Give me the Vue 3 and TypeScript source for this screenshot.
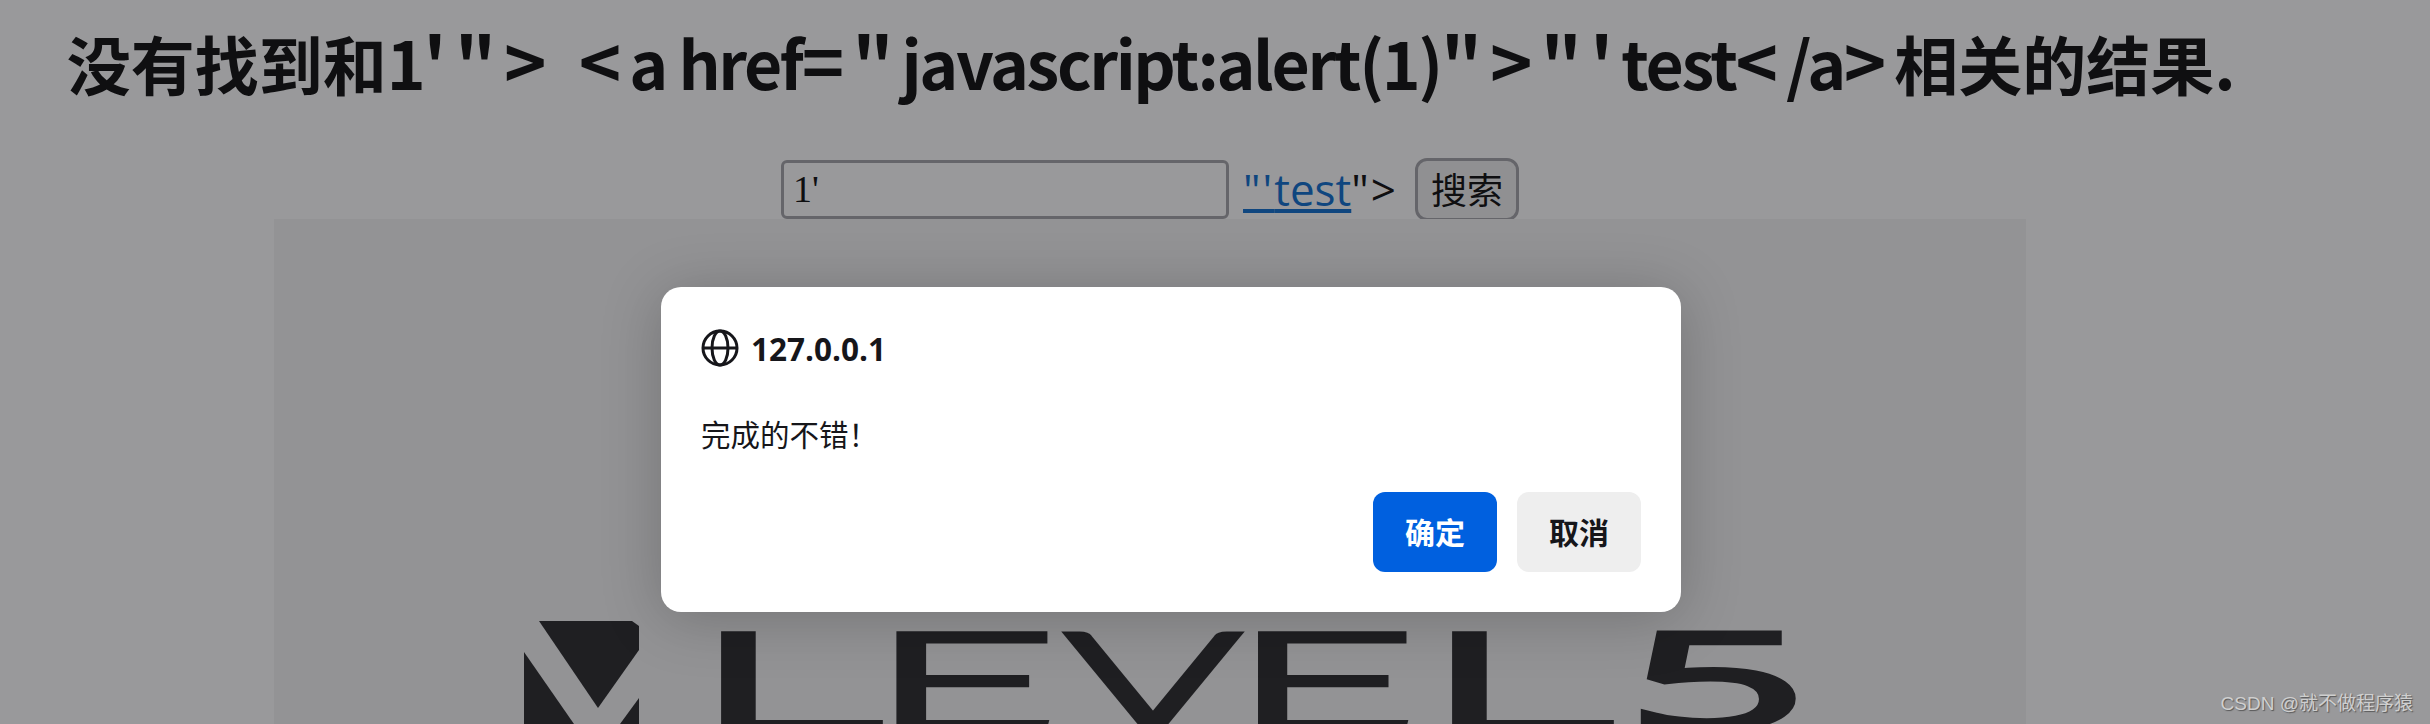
<script setup lang="ts">
import { ref } from 'vue'

const keyword = ref("1'")

// x and width of each letter of the logo
const logoLetters = [
  { ch: 'L', x: 695, w: 178 },
  { ch: 'E', x: 874, w: 178 },
  { ch: 'V', x: 1072, w: 162 },
  { ch: 'E', x: 1236, w: 175 },
  { ch: 'L', x: 1426, w: 178 },
  { ch: '5', x: 1630, w: 174 }
]
</script>

<template>
  <div class="page">
    <div class="content">
      <h1 class="title"><span class="cjk">没有找到和</span>1<span class="sym">'"&gt; &lt;</span>a href<span class="sym">="</span>javascript:alert(1)<span class="sym">"&gt;"'</span>test<span class="sym">&lt;</span>/a<span class="sym">&gt;</span><span class="cjk">相关的结果</span>.</h1>
      <form class="search" @submit.prevent>
        <input v-model="keyword" class="search-input" type="text" />
        <span class="search-rest"><a class="search-link" href="#"><span class="quote">"'</span>test</a><span class="quote">"&gt;</span></span>
        <button class="search-btn" type="button">搜索</button>
      </form>
      <div class="banner">
        <svg class="logo" viewBox="274 219 1752 505" width="1752" height="505">
          <polygon points="539,621 632,621 639,626 639,650 598,708" fill="#1e1e20" />
          <polygon points="524,652 574,724 598,760 524,760" fill="#1e1e20" />
          <polygon points="639,698 620,724 600,760 639,760" fill="#1e1e20" />
          <text
            v-for="(l, i) in logoLetters"
            :key="i"
            class="logo-text"
            :class="{ 'logo-five': l.ch === '5' }"
            :x="l.x"
            y="727"
            :textLength="l.w"
            lengthAdjust="spacingAndGlyphs"
          >{{ l.ch }}</text>
        </svg>
      </div>
    </div>

    <div class="scrim">
      <div class="dialog">
        <div class="dialog-head">
          <svg class="globe" viewBox="0 0 38 38" width="38" height="38" fill="none" stroke="#16161a" stroke-width="3">
            <circle cx="19" cy="19" r="17" />
            <ellipse cx="19" cy="19" rx="8" ry="17" />
            <path d="M2 19h34" />
          </svg>
          <span class="dialog-host">127.0.0.1</span>
        </div>
        <p class="dialog-msg">完成的不错！</p>
        <div class="dialog-actions">
          <button class="btn btn-ok" type="button">确定</button>
          <button class="btn btn-cancel" type="button">取消</button>
        </div>
      </div>
    </div>

    <span class="watermark">CSDN @就不做程序猿</span>
  </div>
</template>

<style>
html,
body {
  margin: 0;
  background: #fff;
  overflow: hidden;
}
</style>

<style scoped>
.page {
  position: relative;
  width: 2430px;
  height: 724px;
  overflow: hidden;
  font-family: "Open Sans", "Noto Sans CJK SC", sans-serif;
  color: #000;
}

.content {
  width: 2300px;
  display: flex;
  flex-direction: column;
  align-items: center;
}

.title {
  margin: 17px 0 0;
  height: 142px;
  font-family: "Noto Sans CJK SC", sans-serif;
  font-size: 66px;
  line-height: 88px;
  font-weight: 700;
  letter-spacing: -2.4px;
  white-space: nowrap;
}

.cjk {
  font-size: 64px;
  letter-spacing: 0;
}

.sym {
  font-size: 72px;
  line-height: 1;
  letter-spacing: 8px;
}

.search {
  display: flex;
  align-items: center;
  height: 60px;
  font-size: 44px;
}

.search-input {
  box-sizing: border-box;
  width: 448px;
  height: 59px;
  padding: 0 9px;
  border: 3px solid #a0a0a4;
  border-radius: 6px;
  background: #fff;
  color: #000;
  font-family: "Liberation Serif", serif;
  font-size: 38px;
  outline: none;
}

.search-rest {
  margin-left: 14px;
  line-height: 60px;
}

.quote {
  letter-spacing: 2px;
}

.search-link {
  color: #0066cc;
}

.search-btn {
  box-sizing: border-box;
  width: 104px;
  height: 63px;
  margin-left: 17px;
  padding: 0 0 2px;
  border: 3px solid #a0a0a4;
  border-radius: 12px;
  background: #efefef;
  color: #000;
  font-family: "Noto Sans CJK SC", sans-serif;
  font-size: 36px;
}

.banner {
  width: 1752px;
  height: 505px;
  background: #f4f4f4;
}

.logo {
  display: block;
}

.logo-text {
  font-family: Lato, sans-serif;
  font-size: 129px;
  font-weight: 100;
  fill: #1e1e20;
  stroke: #1e1e20;
  stroke-width: 11px;
}

.logo-five {
  font-family: "Open Sans", sans-serif;
  font-weight: 300;
  stroke-width: 9px;
}

.scrim {
  position: absolute;
  inset: 0;
  background: rgba(32, 32, 36, 0.46);
}

.dialog {
  position: absolute;
  left: 661px;
  top: 287px;
  box-sizing: border-box;
  width: 1020px;
  height: 325px;
  padding: 42px 40px 40px 40px;
  border-radius: 20px;
  background: #fff;
  box-shadow: 0 6px 60px rgba(0, 0, 0, 0.22);
  color: #16161a;
}

.dialog-head {
  display: flex;
  align-items: center;
  gap: 12px;
  height: 38px;
}

.dialog-host {
  font-size: 31.5px;
  font-weight: 700;
}

.dialog-msg {
  margin: 48px 0 37px;
  font-size: 29.5px;
  line-height: 40px;
}

.dialog-actions {
  display: flex;
  justify-content: flex-end;
  gap: 20px;
}

.btn {
  width: 124px;
  height: 80px;
  padding: 0 0 2px;
  border: 0;
  border-radius: 12px;
  font-family: "Noto Sans CJK SC", sans-serif;
  font-size: 30px;
  font-weight: 700;
}

.btn-ok {
  background: #0060df;
  color: #fff;
}

.btn-cancel {
  background: #eeeeee;
  color: #16161a;
}

.watermark {
  position: absolute;
  right: 17px;
  bottom: 9px;
  font-family: "Liberation Sans", "Noto Sans CJK SC", sans-serif;
  font-size: 19px;
  color: #cfcfcf;
  text-shadow: 1px 1px 1px rgba(60, 60, 60, 0.7);
}
</style>
